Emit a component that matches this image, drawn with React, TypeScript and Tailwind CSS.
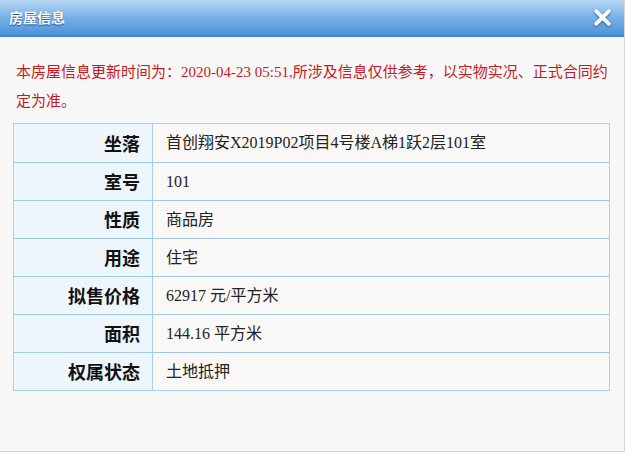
import React from "react";

const rows: [string, string][] = [
  ["坐落", "首创翔安X2019P02项目4号楼A梯1跃2层101室"],
  ["室号", "101"],
  ["性质", "商品房"],
  ["用途", "住宅"],
  ["拟售价格", "62917 元/平方米"],
  ["面积", "144.16 平方米"],
  ["权属状态", "土地抵押"],
];

export default function App() {
  return (
    <div className="w-[625px] h-[452px] bg-[#f7f7f7] flex flex-col overflow-hidden border-r border-b border-[#d6d6d6]">
      <div className="h-[37px] shrink-0 flex items-center justify-between pl-[9px] pr-[12px] bg-gradient-to-b from-[#b6d6f4] via-[#78b1e8] to-[#4b93db] border-b-2 border-[#3f86d2]">
        <span className="text-white font-bold text-[14px] [text-shadow:0_1px_1px_rgba(0,40,100,0.7)] [font-family:'Noto_Sans_CJK_SC',sans-serif]">
          房屋信息
        </span>
        <svg width="19" height="19" viewBox="0 0 18 18" className="[filter:drop-shadow(0_1px_1px_rgba(0,40,100,0.6))]">
          <path d="M3 3 L15 15 M15 3 L3 15" stroke="#ffffff" strokeWidth="3.6" strokeLinecap="round" />
        </svg>
      </div>
      <p className="pt-[20px] pl-[16px] pr-[14px] text-[15px] leading-[28px] text-[#c41a1f] [font-family:'Noto_Sans_CJK_SC',sans-serif]">
        本房屋信息更新时间为：<span className="[font-family:'Liberation_Serif',serif]">2020-04-23 05:51,</span>所涉及信息仅供参考，以实物实况、正式合同约定为准。
      </p>
      <div className="mt-[9px] ml-[13px] w-[597px] border border-[#a3d2ec]">
        {rows.map(([k, v], i) => (
          <div key={k} className={`flex h-[38px] ${i > 0 ? "border-t border-[#a0c8e6]" : ""}`}>
            <div className="w-[139px] shrink-0 bg-[#eef6fd] border-r border-[#a3d2ec] flex items-center justify-end pr-[12px] text-[18px] font-bold text-[#111] [font-family:'Noto_Sans_CJK_SC',sans-serif]">
              {k}
            </div>
            <div className="flex-1 bg-[#faf8f7] flex items-center pl-[13px] text-[16px] text-[#222] [font-family:'Liberation_Serif','Noto_Sans_CJK_SC',serif]">
              {v}
            </div>
          </div>
        ))}
      </div>
    </div>
  );
}
